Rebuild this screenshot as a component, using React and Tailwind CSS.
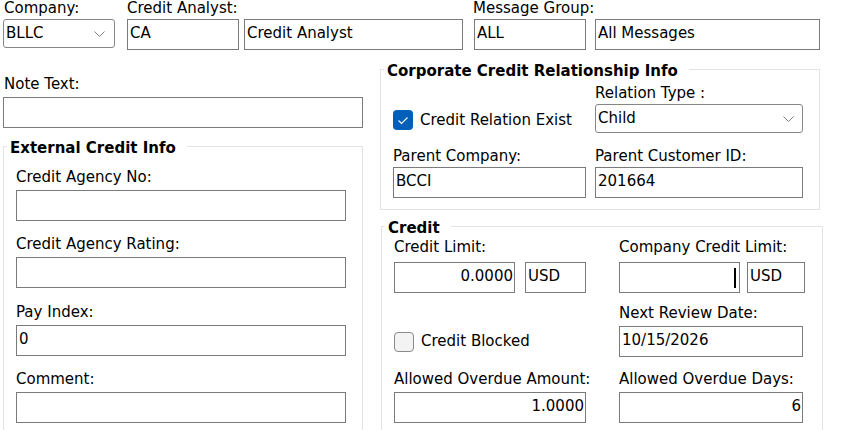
import React from 'react'

const box = 'h-[31px] border border-[#7a7a7a] bg-white pl-[2px] pr-[1px] pb-[3px] outline-none text-black'

const Field = ({ label, value = '', w, right, className = '', gap = 'mt-[4px]' }) => (
    <div className={'flex flex-col ' + className} style={{ width: w }}>
        <span className='whitespace-nowrap'>{label}</span>
        <input
            readOnly
            value={value}
            className={`${box} ${gap} ${right ? 'text-right' : ''}`}
            style={{ width: w }}
        />
    </div>
)

const Chevron = () => (
    <svg width='11' height='6' viewBox='0 0 11 6' className='shrink-0'>
        <path d='M0.5 0.5 L5.5 5.5 L10.5 0.5' fill='none' stroke='#707070' strokeWidth='0.9' />
    </svg>
)

const Select = ({ value, w, arrowPad }) => (
    <div
        className={'h-[29px] border border-[#868686] rounded-[3px] bg-white flex items-center justify-between pl-[2px] ' + arrowPad}
        style={{ width: w }}
    >
        <span>{value}</span>
        <Chevron />
    </div>
)

const CheckBox = ({ checked, label }) => (
    <div className='flex items-center'>
        {checked ? (
            <span className='w-[20px] h-[20px] rounded-[4px] bg-[#005fb8] flex items-center justify-center'>
                <svg width='20' height='20' viewBox='0 0 20 20'>
                    <path d='M5.5 10.5 L8.5 13.5 L14.5 7.5' fill='none' stroke='#ffffff' strokeWidth='1.1' />
                </svg>
            </span>
        ) : (
            <span className='w-[20px] h-[20px] rounded-[4px] bg-[#f3f3f3] border border-[#8a8a8a]' />
        )}
        <span className='ml-[7px] whitespace-nowrap'>{label}</span>
    </div>
)

// legends sit after the fieldset's 12px left padding, pull them back
const legendCls = '-ml-[9px] pl-[3px] pr-[11px] pt-[4px] font-bold whitespace-nowrap'

export default function App() {
    return (
        <div className="w-[841px] h-[430px] overflow-hidden bg-white text-black text-[15px] leading-[17px] font-['DejaVu_Sans',sans-serif]">
            {/* top row */}
            <div className='flex'>
                <div className='flex flex-col ml-[3px]'>
                    <span className='pl-[1px]'>Company:</span>
                    <div className='mt-[2px]'>
                        <Select value='BLLC' w='112px' arrowPad='pr-[9px]' />
                    </div>
                </div>
                <div className='flex flex-col ml-[12px]'>
                    <span>Credit Analyst:</span>
                    <div className='flex mt-[2px] gap-[5px]'>
                        <input readOnly value='CA' className={box} style={{ width: '112px' }} />
                        <input readOnly value='Credit Analyst' className={box} style={{ width: '219px' }} />
                    </div>
                </div>
                <div className='flex flex-col ml-[11px]'>
                    <span className='-ml-[1px]'>Message Group:</span>
                    <div className='flex mt-[2px] gap-[9px]'>
                        <input readOnly value='ALL' className={box} style={{ width: '112px' }} />
                        <input readOnly value='All Messages' className={box} style={{ width: '225px' }} />
                    </div>
                </div>
            </div>

            <div className='flex'>
                {/* left column */}
                <div className='flex flex-col w-[363px]'>
                    <span className='mt-[26px] pl-[4px]'>Note Text:</span>
                    <input readOnly value='' className={box + ' mt-[4px] ml-[3px]'} style={{ width: '360px' }} />

                    <fieldset className='mt-[8px] ml-[3px] w-[360px] border border-[#e3e3e3] pl-[12px] pb-[20px]'>
                        <legend className={legendCls}>External Credit Info</legend>
                        <Field className='mt-[12px]' label='Credit Agency No:' w='330px' />
                        <Field className='mt-[15px]' label='Credit Agency Rating:' w='330px' />
                        <Field className='mt-[16px]' label='Pay Index:' value='0' w='330px' />
                        <Field className='mt-[15px]' label='Comment:' w='330px' />
                    </fieldset>
                </div>

                {/* right column */}
                <div className='flex flex-col ml-[17px]'>
                    <fieldset className='mt-[9px] w-[440px] border border-[#e3e3e3] pl-[12px] pb-[11px]'>
                        <legend className={legendCls}>Corporate Credit Relationship Info</legend>
                        <div className='flex mt-[5px]'>
                            <div className='w-[193px] flex items-end pb-[3px]'>
                                <CheckBox checked label='Credit Relation Exist' />
                            </div>
                            <div className='flex flex-col ml-[9px]'>
                                <span>Relation Type :</span>
                                <div className='mt-[2px]'>
                                    <Select value='Child' w='208px' arrowPad='pr-[8px]' />
                                </div>
                            </div>
                        </div>
                        <div className='flex mt-[15px]'>
                            <Field label='Parent Company:' value='BCCI' w='193px' gap='mt-[2px]' />
                            <Field className='ml-[9px]' label='Parent Customer ID:' value='201664' w='208px' gap='mt-[2px]' />
                        </div>
                    </fieldset>

                    <fieldset className='mt-[6px] ml-[1px] w-[442px] h-[300px] border border-[#e3e3e3] pl-[12px]'>
                        <legend className={legendCls}>Credit</legend>
                        <div className='flex mt-[2px]'>
                            <div className='flex flex-col w-[192px]'>
                                <span>Credit Limit:</span>
                                <div className='flex mt-[6px] gap-[10px]'>
                                    <input readOnly value='0.0000' className={box + ' text-right'} style={{ width: '121px' }} />
                                    <input readOnly value='USD' className={box} style={{ width: '61px' }} />
                                </div>
                            </div>
                            <div className='flex flex-col ml-[33px]'>
                                <span>Company Credit Limit:</span>
                                <div className='flex mt-[6px] gap-[7px]'>
                                    <div className='h-[31px] w-[121px] border border-[#7a7a7a] bg-white flex items-center justify-end pr-[3px]'>
                                        <span className='w-[2px] h-[20px] bg-black' />
                                    </div>
                                    <input readOnly value='USD' className={box} style={{ width: '58px' }} />
                                </div>
                            </div>
                        </div>
                        <div className='flex mt-[12px]'>
                            <div className='w-[192px] flex flex-col justify-end'>
                                <div className='h-[31px] flex items-center'>
                                    <CheckBox label='Credit Blocked' />
                                </div>
                            </div>
                            <Field className='ml-[33px]' label='Next Review Date:' value='10/15/2026' w='184px' />
                        </div>
                        <div className='flex mt-[14px]'>
                            <Field label='Allowed Overdue Amount:' value='1.0000' w='192px' right />
                            <Field className='ml-[33px]' label='Allowed Overdue Days:' value='6' w='184px' right />
                        </div>
                    </fieldset>
                </div>
            </div>
        </div>
    )
}
